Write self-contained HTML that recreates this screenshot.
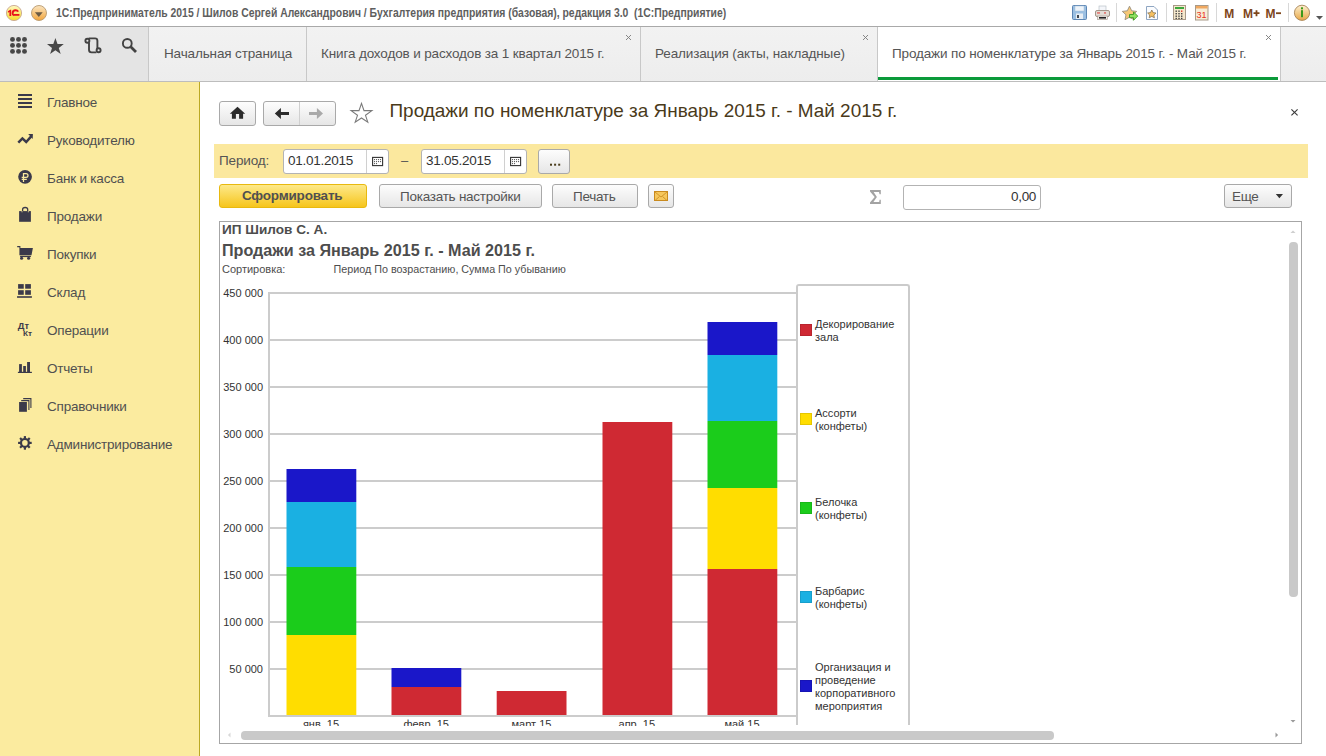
<!DOCTYPE html>
<html><head><meta charset="utf-8">
<style>
*{box-sizing:border-box;margin:0;padding:0}
html,body{width:1326px;height:756px;overflow:hidden;background:#fff;font-family:"Liberation Sans",sans-serif;color:#4d4d4d}
.a{position:absolute}
.t{white-space:pre;position:absolute;line-height:1}
#titlebar{left:0;top:0;width:1326px;height:27px;background:#fff;border-bottom:1px solid #a9a9a9}
#tabbar{left:0;top:27px;width:1326px;height:55px;background:linear-gradient(#f2f2f2,#ededed);border-bottom:1px solid #bdbdbd}
#tbleft{left:0;top:0;width:149px;height:54px;background:#e4e4e4;border-right:1px solid #c8c8c8}
.tab{top:0;height:54px;border-right:1px solid #c8c8c8;font-size:13.5px;letter-spacing:-0.14px;color:#555}
.tab .x{position:absolute;top:5px;font-size:12px;color:#777}
#sidebar{left:0;top:82px;width:200px;height:674px;background:#fbeb9f;border-right:1px solid #bba924}
.si{position:absolute;left:47px;font-size:13.5px;letter-spacing:-0.2px;line-height:1;white-space:pre;color:#505050}
.inp{border:1px solid #b3b3b3;border-radius:3px;background:#fff}
.yl{left:200px;width:63px;text-align:right;font-size:11px;color:#333}
.lg{left:815px;font-size:11px;line-height:13px;color:#333;white-space:nowrap}
.btn{position:absolute;border:1px solid #a9a9a9;border-radius:3px;background:linear-gradient(#fdfdfd,#e6e6e6)}
</style></head><body>

<!-- TITLE BAR -->
<div id="titlebar" class="a">
<svg class="a" style="left:0;top:0" width="1326" height="26">
<defs>
<linearGradient id="g1c" x1="0" y1="0" x2="0" y2="1"><stop offset="0" stop-color="#fff8c0"/><stop offset="1" stop-color="#f6dc28"/></linearGradient>
<linearGradient id="gdd" x1="0" y1="0" x2="0" y2="1"><stop offset="0" stop-color="#fbe6c2"/><stop offset="1" stop-color="#f2a53c"/></linearGradient>
<linearGradient id="ginfo" x1="0" y1="0" x2="0" y2="1"><stop offset="0" stop-color="#fdf0d0"/><stop offset="1" stop-color="#e8a848"/></linearGradient>
</defs>
<!-- 1C logo -->
<circle cx="14" cy="13" r="7.6" fill="url(#g1c)" stroke="#c8a890" stroke-width="0.9"/>
<path d="M7.9 11.3 L10.2 9.8 H11.2 V15.9 H9.4 V12.1 L7.9 12.8Z" fill="#e8141c"/>
<path d="M18.2 11.6 Q17.4 10.2 15.6 10.2 Q12.6 10.2 12.6 13.2 Q12.6 15 14 15.4" fill="none" stroke="#e8141c" stroke-width="1.9"/>
<rect x="14" y="14" width="5.4" height="1.8" fill="#e8141c"/>
<!-- dropdown circle -->
<circle cx="39" cy="13" r="7.5" fill="url(#gdd)" stroke="#b89a70" stroke-width="0.9"/>
<path d="M34.9 12.2 h7.8 l-3.9 4.7z" fill="#6a5a44"/>
<!-- floppy -->
<rect x="1072.5" y="5.5" width="14" height="14" rx="1" fill="#9cc0e2" stroke="#5d86b4"/>
<rect x="1075" y="6" width="9" height="5" fill="#eef4fa" stroke="#a8c0d8" stroke-width="0.5"/>
<rect x="1076" y="13.5" width="7" height="5.5" fill="#e8eef4"/>
<rect x="1077" y="15" width="2" height="3" fill="#404850"/>
<!-- printer -->
<rect x="1099" y="6" width="7" height="5" fill="#f4f6fa" stroke="#b0b8c0" stroke-width="0.6"/>
<rect x="1095.5" y="10.5" width="14" height="6" rx="1.5" fill="#e2dcd4" stroke="#a09488"/>
<rect x="1097" y="12.5" width="3" height="0.9" fill="#e02020"/><rect x="1104" y="12.5" width="2" height="0.9" fill="#e02020"/>
<rect x="1097.5" y="16" width="10" height="3.5" fill="#f0ece8" stroke="#a09488" stroke-width="0.6"/>
<rect x="1099" y="17" width="7" height="1.6" fill="#202020"/>
<rect x="1116" y="3" width="1" height="19" fill="#d8d8d8"/>
<!-- star + arrow -->
<path d="M1129.5 6.2 l2.2 4.6 5 .6 -3.7 3.4 1 4.9 -4.5 -2.5 -4.5 2.5 1 -4.9 -3.7 -3.4 5 -.6z" fill="#f6c877" stroke="#9a9080" stroke-width="0.9"/>
<path d="M1129.5 14.5 h4 v-2.6 l4.2 4.2 -4.2 4.2 v-2.6 h-4z" fill="#8ee060" stroke="#3a9a20" stroke-width="0.9"/>
<!-- doc star -->
<path d="M1146.5 6.5 h7.5 l3.5 3.5 v9.5 h-11z" fill="#fbfcfe" stroke="#8fa6c2"/>
<path d="M1151.8 10 l1.3 2.6 2.9.4 -2.1 2 .5 2.8 -2.6 -1.4 -2.6 1.4 .5 -2.8 -2.1 -2 2.9 -.4z" fill="#f6c060" stroke="#7a6a50" stroke-width="0.7"/>
<rect x="1166" y="3" width="1" height="19" fill="#d8d8d8"/>
<!-- calculator -->
<rect x="1173.5" y="5.5" width="12" height="14" fill="#f6e8cc" stroke="#a89a88"/>
<rect x="1175" y="7" width="9" height="2" fill="#3ca83c"/>
<g fill="#404040">
<rect x="1175.5" y="10.5" width="1.4" height="1.4"/><rect x="1178.3" y="10.5" width="1.4" height="1.4"/><rect x="1181" y="10.5" width="1.4" height="1.4" fill="#e03020"/>
<rect x="1175.5" y="13" width="1.4" height="1.4"/><rect x="1178.3" y="13" width="1.4" height="1.4"/><rect x="1181" y="13" width="1.4" height="1.4"/>
<rect x="1175.5" y="15.5" width="1.4" height="1.4"/><rect x="1178.3" y="15.5" width="1.4" height="1.4"/><rect x="1181" y="15.5" width="1.4" height="1.4"/>
<rect x="1175.5" y="17.8" width="1.4" height="1.2"/><rect x="1178.3" y="17.8" width="1.4" height="1.2"/><rect x="1181" y="17.8" width="1.4" height="1.2"/>
</g>
<!-- calendar -->
<rect x="1195.5" y="5.5" width="12.5" height="14.5" fill="#f8ecd6" stroke="#a89a88"/>
<rect x="1196" y="6" width="11.5" height="2.5" fill="#f0a860"/>
<text x="1196.6" y="17.8" font-family="Liberation Sans" font-size="9" fill="#e83020">31</text>
<rect x="1216" y="3" width="1" height="19" fill="#d8d8d8"/>
<!-- M M+ M- -->
<text x="1224.3" y="17.6" font-family="Liberation Sans" font-weight="bold" font-size="12" fill="#7e4519" transform="scale(1 1)">M</text>
<text x="1243" y="17.6" font-family="Liberation Sans" font-weight="bold" font-size="12" fill="#7e4519">M</text>
<path d="M1253.5 13.2 h6 M1256.5 10.2 v6" stroke="#7e4519" stroke-width="1.8"/>
<text x="1265.6" y="17.6" font-family="Liberation Sans" font-weight="bold" font-size="12" fill="#7e4519">M</text>
<rect x="1276" y="12.3" width="5" height="1.8" fill="#7e4519"/>
<rect x="1288" y="3" width="1" height="19" fill="#d8d8d8"/>
<!-- info -->
<circle cx="1302" cy="12.8" r="7.6" fill="url(#ginfo)" stroke="#a88458" stroke-width="0.9"/>
<rect x="1301" y="7.3" width="2" height="2" fill="#3a9a1a"/>
<rect x="1301" y="10.2" width="2" height="7" fill="#3a9a1a"/>
<path d="M1316 16 h7 l-3.5 3.8z" fill="#555"/>
</svg>
  <div class="t" style="left:56px;top:7px;font-size:12px;font-weight:bold;color:#5e5e5e;transform:scaleX(0.865);transform-origin:0 0">1С:Предприниматель 2015 / Шилов Сергей Александрович / Бухгалтерия предприятия (базовая), редакция 3.0  (1С:Предприятие)</div>
</div>

<!-- TAB BAR -->
<div id="tabbar" class="a">
  <div id="tbleft" class="a"><svg class="a" style="left:0;top:0" width="148" height="54" viewBox="0 27 148 54">
<g fill="#474747">
<circle cx="12.5" cy="39.4" r="2.45"/><circle cx="18.5" cy="39.4" r="2.45"/><circle cx="24.5" cy="39.4" r="2.45"/>
<circle cx="12.5" cy="45.4" r="2.45"/><circle cx="18.5" cy="45.4" r="2.45"/><circle cx="24.5" cy="45.4" r="2.45"/>
<circle cx="12.5" cy="51.4" r="2.45"/><circle cx="18.5" cy="51.4" r="2.45"/><circle cx="24.5" cy="51.4" r="2.45"/>
<path d="M55.4 37.9 L57.5 43.9 L63.8 44.1 L58.8 48 L60.7 53.9 L55.4 50.3 L50.1 53.9 L52 48 L47 44.1 L53.3 43.9Z"/>
</g>
<g fill="none" stroke="#424242" stroke-width="1.9">
<path d="M88.6 38.4 H95 Q97.4 38.4 97.4 40.8 V48.5"/>
<path d="M96.4 52.4 H91.6 Q89 52.4 89 49.8 V42.4"/>
<circle cx="87.4" cy="40.7" r="2"/>
<circle cx="98.6" cy="50.3" r="2"/>
<circle cx="127.3" cy="43.4" r="4.4"/>
</g>
<path d="M130.7 46.8 L136 52" stroke="#424242" stroke-width="2.8"/>
</svg></div>
  <div class="a tab" style="left:149px;width:158px"><span class="t" style="left:15px;top:19.6px">Начальная страница</span></div>
  <div class="a tab" style="left:307px;width:334px"><span class="t" style="left:14px;top:19.6px">Книга доходов и расходов за 1 квартал 2015 г.</span></div>
  <div class="a tab" style="left:641px;width:237px"><span class="t" style="left:14px;top:19.6px">Реализация (акты, накладные)</span></div>
  <div class="a tab" style="left:878px;width:403px;background:#fff"><span class="t" style="left:14px;top:19.6px">Продажи по номенклатуре за Январь 2015 г. - Май 2015 г.</span>
    <div class="a" style="left:0;top:50px;width:400px;height:3px;background:#0b9a3a"></div></div>
</div>

<svg class="a" style="left:625.0px;top:34px" width="7" height="7"><path d="M1 1L6 6M6 1L1 6" stroke="#7a7a7a" stroke-width="0.9"/></svg><svg class="a" style="left:862.0px;top:34px" width="7" height="7"><path d="M1 1L6 6M6 1L1 6" stroke="#7a7a7a" stroke-width="0.9"/></svg><svg class="a" style="left:1265.0px;top:34px" width="7" height="7"><path d="M1 1L6 6M6 1L1 6" stroke="#7a7a7a" stroke-width="0.9"/></svg>
<!-- SIDEBAR -->
<div id="sidebar" class="a">
<svg class="a" style="left:0;top:0" width="199" height="674" viewBox="0 82 199 674">
<g fill="#3b3a4a">
<rect x="18" y="94" width="14" height="2"/><rect x="18" y="98" width="14" height="2"/><rect x="18" y="102" width="14" height="2"/><rect x="18" y="106" width="14" height="2"/>
<circle cx="25.06" cy="176.8" r="6.85"/>
<path d="M19.1 211.1 H30.9 V221.8 H19.1Z"/>
<path d="M17.2 245.9 H20.4 V248 H32.9 L31.5 255.2 H19.4 V247.2 H17.2Z"/>
<rect x="20.1" y="255.8" width="10.8" height="1.3"/>
<circle cx="21.6" cy="258.3" r="1.55"/><circle cx="28.6" cy="258.3" r="1.55"/>
<rect x="18.1" y="284.1" width="5.65" height="4.6"/><rect x="25.2" y="284.1" width="5.7" height="4.6"/>
<rect x="18.1" y="290.2" width="5.65" height="4.6"/><rect x="25.2" y="290.2" width="5.7" height="4.6"/>
<rect x="17.05" y="296.2" width="14.85" height="1.6"/>
<rect x="19.1" y="364.1" width="2.8" height="8.4"/><rect x="23.2" y="366" width="2.7" height="6.5"/><rect x="27.1" y="362" width="2.9" height="10.5"/>
<rect x="17.9" y="371.8" width="14" height="1.2"/>
<rect x="19.1" y="402" width="7.8" height="9.8"/>
<circle cx="24.9" cy="442.9" r="5"/>
<rect x="23.80" y="436.10" width="2.2" height="3" transform="rotate(0 24.9 442.9)"/><rect x="23.80" y="436.10" width="2.2" height="3" transform="rotate(45 24.9 442.9)"/><rect x="23.80" y="436.10" width="2.2" height="3" transform="rotate(90 24.9 442.9)"/><rect x="23.80" y="436.10" width="2.2" height="3" transform="rotate(135 24.9 442.9)"/><rect x="23.80" y="436.10" width="2.2" height="3" transform="rotate(180 24.9 442.9)"/><rect x="23.80" y="436.10" width="2.2" height="3" transform="rotate(225 24.9 442.9)"/><rect x="23.80" y="436.10" width="2.2" height="3" transform="rotate(270 24.9 442.9)"/><rect x="23.80" y="436.10" width="2.2" height="3" transform="rotate(315 24.9 442.9)"/>
</g>
<circle cx="24.9" cy="442.9" r="2.8" fill="#fbeb9f"/>
<path d="M21.2 400.6 H28.9 V410" fill="none" stroke="#3b3a4a" stroke-width="1.1"/>
<path d="M23.2 398.6 H30.9 V408" fill="none" stroke="#3b3a4a" stroke-width="1.1"/>
<path d="M23.5 181.9 V173.6 H26 Q28 173.6 28 175.5 Q28 177.4 26 177.4 H21.7 M21.7 179.4 H26.8" fill="none" stroke="#fbeb9f" stroke-width="1.25"/>
<path d="M22.6 213 V209.6 Q22.6 207.5 25.15 207.5 Q27.7 207.5 27.7 209.6 V213" fill="none" stroke="#3b3a4a" stroke-width="1.3"/>
<path d="M22 211.1 v1.2 M28.3 211.1 v1.2" stroke="#fbeb9f" stroke-width="0.8"/>
<path d="M18.3 142.6 L22.4 138.4 L26.2 142 L31.2 136.4" fill="none" stroke="#3b3a4a" stroke-width="2.5"/>
<path d="M28.2 134 L32.9 134 L32.7 138.9Z" fill="#3b3a4a"/>
<text x="17.8" y="328.6" font-family="Liberation Sans" font-weight="bold" font-size="8.6" fill="#3b3a4a" textLength="11.2" lengthAdjust="spacingAndGlyphs">Дт</text>
<text x="22.9" y="335.8" font-family="Liberation Sans" font-weight="bold" font-size="8" fill="#3b3a4a" textLength="9" lengthAdjust="spacingAndGlyphs">Кт</text>
</svg>
  <div class="si" style="top:13.6px">Главное</div>
  <div class="si" style="top:51.6px">Руководителю</div>
  <div class="si" style="top:89.6px">Банк и касса</div>
  <div class="si" style="top:127.6px">Продажи</div>
  <div class="si" style="top:165.6px">Покупки</div>
  <div class="si" style="top:203.6px">Склад</div>
  <div class="si" style="top:241.6px">Операции</div>
  <div class="si" style="top:279.6px">Отчеты</div>
  <div class="si" style="top:317.6px">Справочники</div>
  <div class="si" style="top:355.6px">Администрирование</div>
</div>

<!-- CONTENT -->
<div class="btn" style="left:219px;top:101px;width:37px;height:25px"></div>
<div class="btn" style="left:263px;top:101px;width:73px;height:25px"></div>
<div class="t" style="left:389.5px;top:102px;font-size:18.95px;color:#4a3a1a">Продажи по номенклатуре за Январь 2015 г. - Май 2015 г.</div>

<div class="a" style="left:214px;top:144px;width:1094px;height:34px;background:#fbe89e"></div>


<!-- PERIOD BAR -->
<div class="t" style="left:219px;top:153.5px;font-size:13.5px;letter-spacing:-0.15px;color:#555">Период:</div>
<div class="a inp" style="left:283px;top:149px;width:106px;height:25px"></div>
<div class="t" style="left:288px;top:154px;font-size:13.5px;letter-spacing:-0.25px;color:#333">01.01.2015</div>
<div class="a" style="left:366px;top:150px;width:1px;height:23px;background:#d0d0d0"></div>
<div class="t" style="left:401px;top:154px;font-size:13px;color:#555">–</div>
<div class="a inp" style="left:421px;top:149px;width:106px;height:25px"></div>
<div class="t" style="left:426px;top:154px;font-size:13.5px;letter-spacing:-0.25px;color:#333">31.05.2015</div>
<div class="a" style="left:504px;top:150px;width:1px;height:23px;background:#d0d0d0"></div>
<div class="btn" style="left:538px;top:149px;width:32px;height:25px"></div>


<!-- TOOLBAR -->
<div class="a" style="left:219px;top:184px;width:148px;height:24px;border:1px solid #e8b90f;border-radius:3px;background:linear-gradient(#fde98a,#f6c51c)"></div>
<div class="t" style="left:242px;top:189px;font-size:13.5px;letter-spacing:-0.2px;font-weight:bold;color:#505050">Сформировать</div>
<div class="btn" style="left:379px;top:184px;width:163px;height:24px"></div>
<div class="t" style="left:400px;top:189.5px;font-size:13.5px;letter-spacing:-0.25px;color:#555">Показать настройки</div>
<div class="btn" style="left:552px;top:184px;width:86px;height:24px"></div>
<div class="t" style="left:573px;top:189.5px;font-size:13.5px;letter-spacing:-0.3px;color:#555">Печать</div>
<div class="btn" style="left:648px;top:184px;width:26px;height:24px"></div>
<svg class="a" style="left:860px;top:185px" width="30" height="25" viewBox="860 185 30 25"><path d="M870 190 H880.8 V194.2 H879.6 L879 191.9 H873.6 L876.9 197 L873.4 202.1 H879.2 L879.6 199.8 H880.8 V203.9 H870 V202.6 L874.7 197 L870 191.4Z" fill="#a3a3a3"/></svg>
<div class="a inp" style="left:903px;top:185px;width:138px;height:25px"></div>
<div class="t" style="left:1011px;top:190px;font-size:13.5px;letter-spacing:-0.3px;color:#333">0,00</div>
<div class="btn" style="left:1224px;top:184px;width:68px;height:24px"></div>
<div class="t" style="left:1232px;top:189.5px;font-size:13.5px;letter-spacing:-0.3px;color:#555">Еще</div>

<!-- REPORT -->
<div class="a" style="left:219px;top:221px;width:1083px;height:523px;border:1px solid #a6a6a6;background:#fff"></div>
<div class="t" style="left:222px;top:223px;font-size:13.6px;font-weight:bold;color:#4d4d4d">ИП Шилов С. А.</div>
<div class="t" style="left:222px;top:242px;font-size:16.15px;font-weight:bold;color:#4d4d4d">Продажи за Январь 2015 г. - Май 2015 г.</div>
<div class="t" style="left:222px;top:264px;font-size:11px;color:#4d4d4d">Сортировка:</div>
<div class="t" style="left:333.5px;top:264px;font-size:10.75px;color:#4d4d4d">Период По возрастанию, Сумма По убыванию</div>
<svg class="a" style="left:0;top:0" width="1326" height="756" shape-rendering="crispEdges">
<rect x="268" y="292" width="529" height="2" fill="#cccccc"/>
<rect x="268" y="339" width="529" height="2" fill="#cccccc"/>
<rect x="268" y="386" width="529" height="2" fill="#cccccc"/>
<rect x="268" y="433" width="529" height="2" fill="#cccccc"/>
<rect x="268" y="480" width="529" height="2" fill="#cccccc"/>
<rect x="268" y="527" width="529" height="2" fill="#cccccc"/>
<rect x="268" y="574" width="529" height="2" fill="#cccccc"/>
<rect x="268" y="621" width="529" height="2" fill="#cccccc"/>
<rect x="268" y="668" width="529" height="2" fill="#cccccc"/>
<rect x="268" y="715" width="529" height="2" fill="#cccccc"/>
<rect x="268" y="292" width="2" height="425" fill="#cccccc"/>
<rect x="286.5" y="469" width="69.8" height="33" fill="#1a17c9" shape-rendering="geometricPrecision"/>
<rect x="286.5" y="502" width="69.8" height="65" fill="#1ab0e2" shape-rendering="geometricPrecision"/>
<rect x="286.5" y="567" width="69.8" height="68" fill="#1bcc1b" shape-rendering="geometricPrecision"/>
<rect x="286.5" y="635" width="69.8" height="80" fill="#ffdd00" shape-rendering="geometricPrecision"/>
<rect x="391.5" y="668" width="69.8" height="19" fill="#1a17c9" shape-rendering="geometricPrecision"/>
<rect x="391.5" y="687" width="69.8" height="28" fill="#cf2933" shape-rendering="geometricPrecision"/>
<rect x="496.7" y="691" width="69.8" height="24" fill="#cf2933" shape-rendering="geometricPrecision"/>
<rect x="602.5" y="422" width="69.8" height="293" fill="#cf2933" shape-rendering="geometricPrecision"/>
<rect x="707.5" y="322" width="69.8" height="33" fill="#1a17c9" shape-rendering="geometricPrecision"/>
<rect x="707.5" y="355" width="69.8" height="66" fill="#1ab0e2" shape-rendering="geometricPrecision"/>
<rect x="707.5" y="421" width="69.8" height="67" fill="#1bcc1b" shape-rendering="geometricPrecision"/>
<rect x="707.5" y="488" width="69.8" height="81" fill="#ffdd00" shape-rendering="geometricPrecision"/>
<rect x="707.5" y="569" width="69.8" height="146" fill="#cf2933" shape-rendering="geometricPrecision"/>
</svg>
<div class="t yl" style="top:288px">450 000</div>
<div class="t yl" style="top:335px">400 000</div>
<div class="t yl" style="top:382px">350 000</div>
<div class="t yl" style="top:429px">300 000</div>
<div class="t yl" style="top:476px">250 000</div>
<div class="t yl" style="top:523px">200 000</div>
<div class="t yl" style="top:570px">150 000</div>
<div class="t yl" style="top:617px">100 000</div>
<div class="t yl" style="top:664px">50 000</div>
<div class="a" style="left:270px;top:717px;width:526px;height:9px;overflow:hidden"><div class="t" style="left:1.0px;width:100px;text-align:center;top:2px;font-size:11px;color:#333">янв. 15</div><div class="t" style="left:106.2px;width:100px;text-align:center;top:2px;font-size:11px;color:#333">февр. 15</div><div class="t" style="left:211.5px;width:100px;text-align:center;top:2px;font-size:11px;color:#333">март 15</div><div class="t" style="left:316.8px;width:100px;text-align:center;top:2px;font-size:11px;color:#333">апр. 15</div><div class="t" style="left:422.0px;width:100px;text-align:center;top:2px;font-size:11px;color:#333">май 15</div></div>
<div class="a" style="left:796px;top:284px;width:114px;height:441px;border:2px solid #cbcbcb;border-bottom:none;border-radius:3px 3px 0 0"></div>
<div class="a" style="left:800px;top:324px;width:12px;height:12px;box-shadow:inset 0 0 0 1px rgba(0,0,0,0.1);background:#cf2933"></div>
<div class="a lg" style="top:318px">Декорирование<br>зала</div>
<div class="a" style="left:800px;top:413px;width:12px;height:12px;box-shadow:inset 0 0 0 1px rgba(0,0,0,0.1);background:#ffdd00"></div>
<div class="a lg" style="top:407px">Ассорти<br>(конфеты)</div>
<div class="a" style="left:800px;top:502px;width:12px;height:12px;box-shadow:inset 0 0 0 1px rgba(0,0,0,0.1);background:#1bcc1b"></div>
<div class="a lg" style="top:496px">Белочка<br>(конфеты)</div>
<div class="a" style="left:800px;top:591px;width:12px;height:12px;box-shadow:inset 0 0 0 1px rgba(0,0,0,0.1);background:#1ab0e2"></div>
<div class="a lg" style="top:585px">Барбарис<br>(конфеты)</div>
<div class="a" style="left:800px;top:680px;width:12px;height:12px;box-shadow:inset 0 0 0 1px rgba(0,0,0,0.1);background:#1a17c9"></div>
<div class="a lg" style="top:661px">Организация и<br>проведение<br>корпоративного<br>мероприятия</div>
<div class="a" style="left:241px;top:731px;width:813px;height:9px;background:#c9c9c9;border-radius:4px"></div>
<div class="a" style="left:1289px;top:242px;width:9px;height:355px;background:#c9c9c9;border-radius:4px"></div>
<svg class="a" style="left:200px;top:82px" width="1126" height="150" viewBox="200 82 1126 150">
<!-- home -->
<path d="M237.5 106.7 L245.2 113.8 H243.1 V118.8 H239.1 V114 H235.9 V118.8 H231.9 V113.8 H229.8Z" fill="#2b2b2b"/>
<!-- back -->
<path d="M274.8 113.4 L280.9 107.9 V111.9 H289 V114.9 H280.9 V118.9Z" fill="#2b2b2b"/>
<path d="M323 113.4 L316.9 107.9 V111.9 H309 V114.9 H316.9 V118.9Z" fill="#a9a9a9"/>
<rect x="299" y="102" width="1" height="23" fill="#d0d0d0"/>
<!-- star outline -->
<path d="M361.5 103.4 L364 110.6 L371.9 110.6 L365.5 115.3 L367.8 122.2 L361.5 118 L355.2 122.2 L357.5 115.3 L351.1 110.6 L359 110.6Z" fill="none" stroke="#7a7a7a" stroke-width="1.1" stroke-linejoin="miter"/>
<!-- close -->
<path d="M1291.4 109.3 L1297.6 115.3 M1297.6 109.3 L1291.4 115.3" stroke="#3a3a3a" stroke-width="1.15"/>
<!-- calendar icons -->
<g id="cal">
<rect x="372.6" y="157.4" width="10" height="8.2" fill="none" stroke="#333" stroke-width="1.1"/>
<g fill="#333"><circle cx="374.6" cy="159.6" r=".55"/><circle cx="376.6" cy="159.6" r=".55"/><circle cx="378.6" cy="159.6" r=".55"/><circle cx="380.6" cy="159.6" r=".55"/>
<circle cx="374.6" cy="161.6" r=".55"/><circle cx="376.6" cy="161.6" r=".55"/><circle cx="378.6" cy="161.6" r=".55"/><circle cx="380.6" cy="161.6" r=".55"/>
<circle cx="374.6" cy="163.6" r=".55"/><circle cx="376.6" cy="163.6" r=".55"/></g>
</g>
<use href="#cal" x="138"/>
<!-- dots -->
<g fill="#4a3c1c"><rect x="550" y="163.7" width="2" height="2"/><rect x="554.1" y="163.7" width="2" height="2"/><rect x="558.2" y="163.7" width="2" height="2"/></g>
<!-- mail -->
<rect x="654.5" y="191.5" width="13" height="9" fill="#f6c75c" stroke="#c98a1e"/>
<path d="M655 192 L661 197 L667 192 M655 200.5 L659.5 196.5 M667 200.5 L662.5 196.5" fill="none" stroke="#c98a1e" stroke-width=".8"/>
<!-- еще arrow -->
<path d="M1275.8 194 H1283 L1279.4 198.2Z" fill="#333"/>
</svg>
<svg class="a" style="left:1220px;top:222px" width="80" height="520" viewBox="1220 222 80 520">
<path d="M1290.5 233 h5 l-2.5 -2.5z" fill="#cfcfcf"/>
<path d="M1290.5 720 h5 l-2.5 2.6z" fill="#9a9a9a"/>
<path d="M1275.5 732.5 v5 l2.6 -2.5z" fill="#9a9a9a"/>
</svg>
<svg class="a" style="left:222px;top:728px" width="12" height="12"><path d="M8.5 4.5 v5 l-2.6 -2.5z" fill="#d8d8d8"/></svg>
</body></html>
